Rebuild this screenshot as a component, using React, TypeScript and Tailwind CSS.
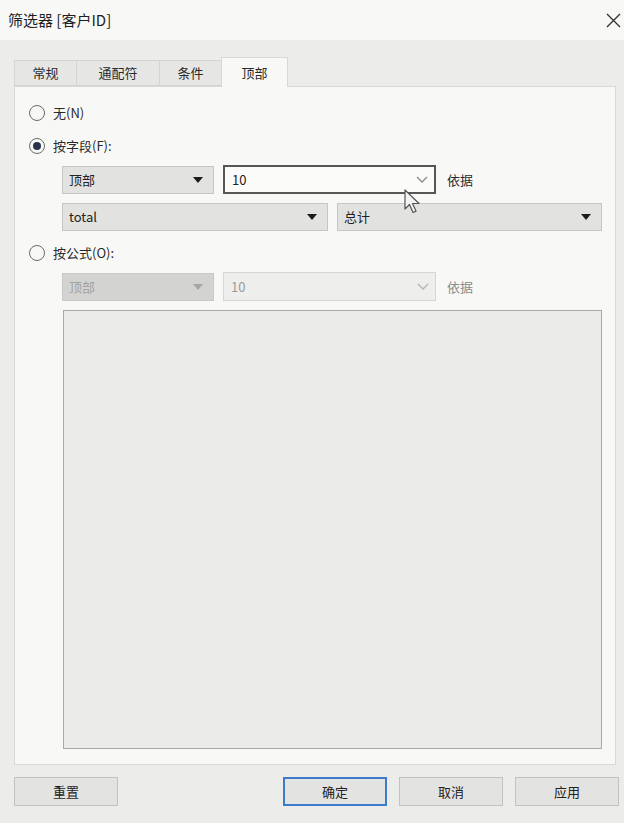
import React from 'react';

const font = { fontFamily: '"Noto Sans CJK SC", "Noto Sans", sans-serif' };

function Radio({ checked, label }: { checked?: boolean; label: string }) {
  return (
    <div className="flex items-center h-[18px] gap-[8px]">
      <span className="w-[16px] h-[16px] rounded-full border-[1.5px] border-[#6b6b6b] bg-[#f8f9f7] flex items-center justify-center">
        {checked && <span className="w-[8px] h-[8px] rounded-full bg-[#27334d]" />}
      </span>
      <span className="text-[13px] text-[#2a2a2a]">{label}</span>
    </div>
  );
}

function Caret({ light }: { light?: boolean }) {
  return (
    <svg width="10" height="6" viewBox="0 0 10 6">
      <path d="M0 0h10L5 6z" fill={light ? '#a6a6a6' : '#1c1c1c'} />
    </svg>
  );
}

function Chevron({ light }: { light?: boolean }) {
  return (
    <svg width="12" height="8" viewBox="0 0 12 8">
      <path d="M1 1l5 5 5-5" fill="none" stroke={light ? '#b4b4b4' : '#8a8a8a'} strokeWidth="1.3" />
    </svg>
  );
}

function Select({ text, w, disabled }: { text: string; w: string; disabled?: boolean }) {
  return (
    <div
      className={`${w} h-[28px] flex items-center justify-between pl-[6px] pr-[10px] border ${
        disabled ? 'bg-[#d3d4d2] border-[#c9c9c7] text-[#a3a3a3]' : 'bg-[#e2e2e0] border-[#c6c6c4] text-[#222]'
      } text-[13px]`}
    >
      <span>{text}</span>
      <Caret light={disabled} />
    </div>
  );
}

function Combo({ disabled }: { disabled?: boolean }) {
  return (
    <div
      className={`w-[213px] h-[29px] flex items-center justify-between pl-[7px] pr-[6px] text-[13px] ${
        disabled
          ? 'bg-[#eeeeec] border border-[#d6d6d4] text-[#9c9c9c]'
          : 'bg-[#fbfbfa] border-2 border-[#555755] text-[#222]'
      }`}
    >
      <span>10</span>
      <Chevron light={disabled} />
    </div>
  );
}

function Btn({ label, primary }: { label: string; primary?: boolean }) {
  return (
    <div
      className={`w-[104px] h-[29px] flex items-center justify-center text-[13px] text-[#222] bg-[#e3e3e1] ${
        primary ? 'border-2 border-[#3d7ccc]' : 'border border-[#c2c2c0]'
      }`}
    >
      {label}
    </div>
  );
}

export default function App() {
  const tabs = ['常规', '通配符', '条件', '顶部'];
  const tabW = ['w-[63px]', 'w-[84px]', 'w-[63px]', 'w-[67px]'];

  return (
    <div className="w-[624px] h-[823px] bg-[#ececea] flex flex-col overflow-hidden relative" style={font}>
      {/* title bar */}
      <div className="h-[40px] bg-[#f8f9f7] flex items-center justify-between pl-[8px] pr-[3px]">
        <span className="text-[15px] text-[#1e1e1e]">筛选器 [客户ID]</span>
        <svg width="15" height="15" viewBox="0 0 15 15">
          <path d="M1 1l13 13M14 1L1 14" stroke="#333" strokeWidth="1.4" />
        </svg>
      </div>

      <div className="pl-[14px] pr-[5px] pt-[17px]">
        {/* tabs */}
        <div className="flex items-end h-[29px]">
          {tabs.map((t, i) =>
            i === 3 ? (
              <div
                key={t}
                className={`${tabW[i]} h-[30px] -mb-px z-10 bg-[#f8f9f7] border border-b-0 border-[#d8d8d6] flex items-center justify-center text-[13px] text-[#2a2a2a]`}
              >
                {t}
              </div>
            ) : (
              <div
                key={t}
                className={`${tabW[i]} h-[26px] bg-[#e6e6e4] border border-[#d4d4d2] -mr-px flex items-center justify-center text-[13px] text-[#2a2a2a]`}
              >
                {t}
              </div>
            )
          )}
        </div>

        {/* panel */}
        <div className="w-[602px] h-[679px] bg-[#f8f9f7] border border-[#d8d8d6] pt-[17px] pl-[14px] pr-[13px] flex flex-col">
          <Radio label="无(N)" />
          <div className="mt-[15px]">
            <Radio checked label="按字段(F):" />
          </div>
          <div className="mt-[10px] pl-[33px] flex items-center">
            <Select text="顶部" w="w-[152px]" />
            <div className="ml-[9px]">
              <Combo />
            </div>
            <span className="ml-[11px] text-[13px] text-[#2a2a2a]">依据</span>
          </div>
          <div className="mt-[9px] pl-[33px] flex items-center gap-[9px]">
            <Select text="total" w="w-[266px]" />
            <Select text="总计" w="w-[265px]" />
          </div>
          <div className="mt-[13px]">
            <Radio label="按公式(O):" />
          </div>
          <div className="mt-[10px] pl-[33px] flex items-center">
            <Select text="顶部" w="w-[152px]" disabled />
            <div className="ml-[9px]">
              <Combo disabled />
            </div>
            <span className="ml-[11px] text-[13px] text-[#8a8a8a]">依据</span>
          </div>
          <div className="mt-[9px] ml-[34px] w-[539px] h-[439px] bg-[#ebebea] border border-[#a9a9a7]" />
        </div>

        {/* buttons */}
        <div className="mt-[12px] flex">
          <Btn label="重置" />
          <div className="ml-auto flex gap-[12px]">
            <Btn label="确定" primary />
            <Btn label="取消" />
            <Btn label="应用" />
          </div>
        </div>
      </div>

      {/* mouse pointer */}
      <svg className="absolute left-[404px] top-[189px]" width="16" height="26" viewBox="0 0 16 26">
        <path d="M1 1v19l4.5-4.5 3.5 8 3-1.4-3.5-7.6H15z" fill="#f4f4f4" stroke="#555" strokeWidth="1.2" strokeLinejoin="round" />
      </svg>
    </div>
  );
}
